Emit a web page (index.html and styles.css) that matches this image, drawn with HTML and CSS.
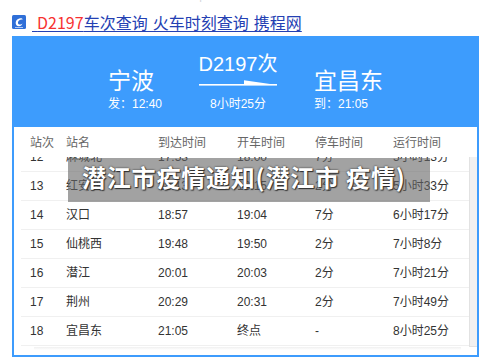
FILE: index.html
```html
<!DOCTYPE html>
<html lang="zh-CN">
<head>
<meta charset="utf-8">
<title>D2197车次查询</title>
<link rel="stylesheet" href="styles.css">
</head>
<body>
<div class="page">
  <div class="prev"><span class="prev-text">携程网 火车票 列车时刻表 查询</span><span class="prev-sep">|</span></div>
  <div class="title">
    <svg class="favicon" width="14" height="14" viewBox="0 0 14 14">
      <rect x="0" y="0" width="14" height="14" rx="1.5" fill="#2f6fd8"/>
      <path d="M4 9.5 C3 6.5 5 3.5 8.5 3.3 C10 3.2 10.8 4 10.6 4.6 C9 4 6.5 4.8 6 7.2 C5.7 8.6 6.6 9.6 8 9.6 C9.2 9.6 10 9 10.4 8.3 C10.2 10.2 8.5 11.3 6.7 11.2 C5.5 11.1 4.5 10.5 4 9.5 Z" fill="#fff"/>
      <rect x="3" y="12" width="8" height="0.8" fill="#cfe0ff"/>
    </svg>
    <a class="link" href="#"> <span class="hl">D2197</span>车次查询 火车时刻查询 携程网</a>
  </div>

  <div class="panel">
    <div class="hero">
      <div class="stop">
        <div class="city">宁波</div>
        <div class="sub">发：12:40</div>
      </div>
      <div class="mid">
        <div class="train">D2197次</div>
        <svg class="arrow" width="78" height="10" viewBox="0 0 78 10">
          <rect x="0" y="5" width="78" height="1.6" fill="#fff"/>
          <polygon points="45,1.2 78,6 45,6" fill="#fff"/>
        </svg>
        <div class="sub">8小时25分</div>
      </div>
      <div class="stop">
        <div class="city">宜昌东</div>
        <div class="sub">到：21:05</div>
      </div>
    </div>

    <div class="thead">
      <span>站次</span><span>站名</span><span>到达时间</span><span>开车时间</span><span>停车时间</span><span>运行时间</span>
    </div>

    <div class="tbody">
      <div class="rows">
        <div class="list">
          <div class="row"><span>12</span><span>麻城北</span><span>17:53</span><span>18:00</span><span>7分</span><span>5小时13分</span></div>
          <div class="row"><span>13</span><span>红安西</span><span>18:13</span><span>18:15</span><span>2分</span><span>5小时33分</span></div>
          <div class="row"><span>14</span><span>汉口</span><span>18:57</span><span>19:04</span><span>7分</span><span>6小时17分</span></div>
          <div class="row"><span>15</span><span>仙桃西</span><span>19:48</span><span>19:50</span><span>2分</span><span>7小时8分</span></div>
          <div class="row"><span>16</span><span>潜江</span><span>20:01</span><span>20:03</span><span>2分</span><span>7小时21分</span></div>
          <div class="row"><span>17</span><span>荆州</span><span>20:29</span><span>20:31</span><span>2分</span><span>7小时49分</span></div>
          <div class="row"><span>18</span><span>宜昌东</span><span>21:05</span><span>终点</span><span>-</span><span>8小时25分</span></div>
        </div>
      </div>
      <div class="scrollbar"></div>
    </div>
    <div class="shade"></div>
  </div>

  <div class="overlay">潜江市疫情通知(潜江市 疫情)</div>
</div>
</body>
</html>
```

FILE: styles.css
```css
* { box-sizing: border-box; }

html, body {
  margin: 0;
  padding: 0;
  background: #fff;
}

body {
  width: 500px;
  height: 361px;
  overflow: hidden;
  font-family: "Liberation Sans", "Noto Sans CJK SC", sans-serif;
}

.page {
  position: relative;
}

.prev {
  display: flex;
  height: 4px;
  overflow: hidden;
  padding-left: 13px;
}

.prev-text {
  display: block;
  margin-top: -12px;
  font-size: 12px;
  line-height: 14px;
  color: #d4d6dc;
}

.prev-sep {
  display: block;
  margin: -12px 0 0 20px;
  font-size: 12px;
  line-height: 14px;
  color: #d4d6dc;
}

.title {
  display: flex;
  align-items: center;
  height: 32px;
  padding: 4px 0 0 12px;
}

.favicon {
  display: block;
  flex: none;
}

.link {
  margin-left: 6px;
  font-family: "Noto Sans CJK SC", "Liberation Sans", sans-serif;
  font-size: 16px;
  line-height: 28px;
  color: #2440b3;
  text-decoration: underline;
  text-underline-offset: 2px;
  white-space: pre;
  word-spacing: 1.5px;
}

.hl {
  color: #f73131;
}

.panel {
  margin-left: 12px;
  width: 467px;
  height: 321px;
  border: 2px solid #3d9cfd;
  background: #fff;
  position: relative;
}

.hero {
  height: 89px;
  background: #3d9cfd;
  display: flex;
  justify-content: center;
  align-items: flex-end;
  gap: 37px;
  padding-bottom: 14px;
  color: #fff;
  font-family: "Noto Sans CJK SC", "Liberation Sans", sans-serif;
}

.stop, .mid {
  display: flex;
  flex-direction: column;
}

.mid {
  align-items: center;
  width: 78px;
}

.city {
  font-size: 23px;
  line-height: 26px;
  margin-bottom: 3px;
}

.sub {
  font-family: "Liberation Sans", "Noto Sans CJK SC", sans-serif;
  font-size: 12px;
  line-height: 18px;
  white-space: nowrap;
}

.train {
  font-family: "Liberation Sans", "Noto Sans CJK SC", sans-serif;
  font-size: 20px;
  line-height: 24px;
  margin-bottom: 3px;
  white-space: nowrap;
}

.arrow {
  display: block;
  margin-bottom: 6px;
}

.thead, .row {
  display: grid;
  grid-template-columns: 36px 92px 79px 78px 78px auto;
  font-size: 12px;
  white-space: nowrap;
}

.thead {
  height: 30px;
  line-height: 30px;
  padding-left: 16px;
  color: #666;
  font-family: "Noto Sans CJK SC", "Liberation Sans", sans-serif;
}

.tbody {
  display: flex;
  height: 190px;
  margin-left: 7px;
}

.rows {
  flex: 1;
  overflow: hidden;
}

.list {
  margin-top: -14px;
}

.row {
  height: 29px;
  line-height: 28px;
  padding-left: 9px;
  border-bottom: 1px solid #f0f0f0;
  color: #333;
}

.scrollbar {
  width: 8px;
  flex: none;
  background: #f1f1f1;
  border-left: 1px solid #e2e2e2;
  border-bottom: 1px solid #e2e2e2;
}

.shade {
  height: 3px;
  margin: 0 16px 0 20px;
  background: linear-gradient(to bottom, rgba(0,0,0,0.06), rgba(0,0,0,0));
}

.overlay {
  position: absolute;
  left: 68px;
  top: 158px;
  width: 362px;
  height: 44px;
  padding-left: 14px;
  background: rgba(100, 100, 100, 0.6);
  color: #fff;
  font-family: "Noto Sans CJK SC", sans-serif;
  font-weight: 700;
  font-size: 24px;
  line-height: 38px;
  letter-spacing: 0.8px;
  white-space: nowrap;
  text-shadow: 0 0 2px #222, 1px 1px 1px #333;
}
```
